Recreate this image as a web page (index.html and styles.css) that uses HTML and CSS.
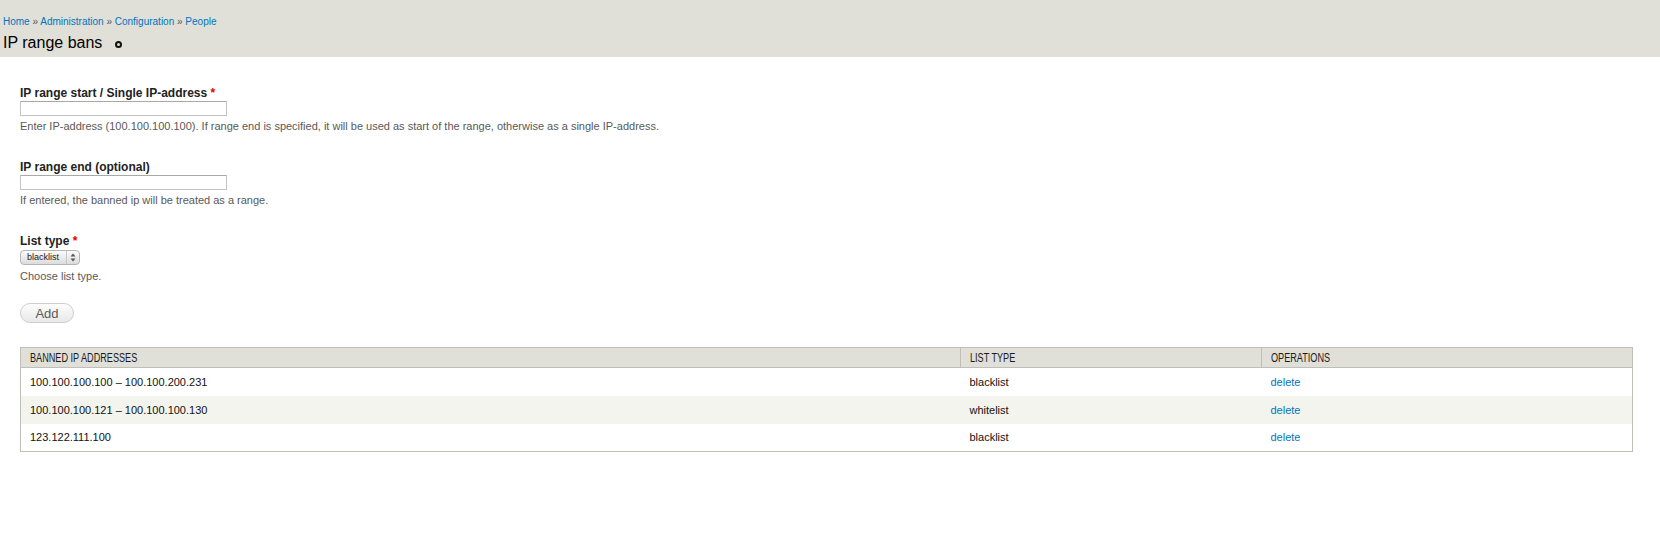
FILE: index.html
```html
<html><head>
    <meta charset="UTF-8">
    <meta name="viewport" content="width=device-width, initial-scale=1.0">
    <title>IP range bans | Administration</title>
    <link rel="stylesheet" href="styles.css">
    </head>
    <body>
        <div class="branding">
            <div class="breadcrumb">
                <a href="#">Home</a> » <a href="#">Administration</a> » <a href="#">Configuration</a> » <a href="#">People</a>
            </div>
            <h1 class="page-title">IP range bans <span class="shortcut"></span></h1>
        </div>

        <div class="content">
            <form class="ban-form">
                <div class="form-item">
                    <label for="ip-start">IP range start / Single IP-address <span class="required">*</span></label>
                    <input type="text" id="ip-start" class="form-text">
                    <div class="description">Enter IP-address (100.100.100.100). If range end is specified, it will be used as start of the range, otherwise as a single IP-address.</div>
                </div>
                <div class="form-item">
                    <label for="ip-end">IP range end (optional)</label>
                    <input type="text" id="ip-end" class="form-text">
                    <div class="description">If entered, the banned ip will be treated as a range.</div>
                </div>
                <div class="form-item form-type-select">
                    <label for="list-type">List type <span class="required">*</span></label>
                    <span class="select-wrap">
                        <select id="list-type" class="form-select">
                            <option>blacklist</option>
                            <option>whitelist</option>
                        </select>
                        <svg class="select-arrows" width="6" height="9" viewBox="0 0 6 9">
                            <path d="M3 0.5 L5.5 3.5 H0.5 Z" fill="#555"/>
                            <path d="M3 8.5 L5.5 5.5 H0.5 Z" fill="#555"/>
                        </svg>
                    </span>
                    <div class="description">Choose list type.</div>
                </div>
                <button type="button" class="form-submit">Add</button>
            </form>

            <table class="bans">
                <thead>
                    <tr>
                        <th class="col-ip"><span>Banned IP addresses</span></th>
                        <th class="col-type"><span>List type</span></th>
                        <th class="col-ops"><span>Operations</span></th>
                    </tr>
                </thead>
                <tbody>
                    <tr>
                        <td>100.100.100.100 – 100.100.200.231</td>
                        <td>blacklist</td>
                        <td><a href="#">delete</a></td>
                    </tr>
                    <tr class="even">
                        <td>100.100.100.121 – 100.100.100.130</td>
                        <td>whitelist</td>
                        <td><a href="#">delete</a></td>
                    </tr>
                    <tr>
                        <td>123.122.111.100</td>
                        <td>blacklist</td>
                        <td><a href="#">delete</a></td>
                    </tr>
                </tbody>
            </table>
        </div>
    </body>
    </html>
```

FILE: styles.css
```css
:root {
    --color-bar: #e0e0d8;
    --color-border: #bebfb9;
    --color-row-even: #f3f4ee;
    --color-link: #0074bd;
    --color-text: #333;
    --color-muted: #595959;
    --color-required: #e60000;
}

body {
    font-family: 'Liberation Sans', Arial, sans-serif;
    margin: 0;
    padding: 0;
    color: var(--color-text);
    background-color: #fff;
}

a {
    color: var(--color-link);
    text-decoration: none;
}

/* top grey bar */
.branding {
    background-color: var(--color-bar);
    height: 57px;
    box-sizing: border-box;
    padding: 15px 3px 0;
}

.breadcrumb {
    font-size: 10px;
    line-height: 14px;
    color: #555;
}

.page-title {
    margin: 4px 0 0;
    font-size: 16px;
    line-height: 20px;
    font-weight: normal;
    color: #000;
    display: flex;
    align-items: center;
}

.shortcut {
    width: 3px;
    height: 3px;
    border: 2px solid #111;
    border-radius: 50%;
    margin-left: 13px;
    margin-top: 2px;
}

.content {
    padding: 28px 27px 0 20px;
}

/* form */
.form-item {
    margin-bottom: 26px;
}

.form-item.form-type-select {
    margin-bottom: 20px;
}

.form-item label {
    display: block;
    font-size: 12px;
    line-height: 16px;
    font-weight: bold;
    color: #222;
}

.required {
    color: var(--color-required);
}

.form-text {
    display: block;
    width: 207px;
    height: 15px;
    box-sizing: border-box;
    margin: 0;
    padding: 0 3px;
    border: 1px solid #c3c3c3;
    border-top-color: #a8a8a8;
    font-size: 11px;
}

.description {
    margin-top: 3px;
    font-size: 11px;
    line-height: 14px;
    color: var(--color-muted);
}

.select-wrap {
    position: relative;
    display: block;
    width: max-content;
    margin-top: 1px;
}

.form-select {
    appearance: none;
    -webkit-appearance: none;
    display: block;
    width: 60px;
    height: 15px;
    box-sizing: border-box;
    margin: 0;
    padding: 0 16px 0 6px;
    font-family: 'Liberation Sans', Arial, sans-serif;
    font-size: 9px;
    line-height: 13px;
    color: #222;
    border: 1px solid #b5b5b5;
    border-radius: 4px;
    background: linear-gradient(#fbfbfb, #dcdcdc);
}

.select-arrows {
    position: absolute;
    top: 1px;
    right: 1px;
    height: 13px;
    width: 13px;
    padding: 0 3px;
    box-sizing: border-box;
    border-left: 1px solid #c5c5c5;
}

.select-wrap + .description {
    margin-top: 4px;
}

.form-submit {
    display: block;
    width: 54px;
    height: 20px;
    margin: 0 0 24px;
    padding: 0;
    font-family: 'Liberation Sans', Arial, sans-serif;
    font-size: 13px;
    color: #5a5a5a;
    border: 1px solid #cfcfcf;
    border-radius: 10px;
    background: linear-gradient(#fdfdfd, #e8e8e8);
}

/* table */
.bans {
    width: 100%;
    border-collapse: collapse;
    border: 1px solid var(--color-border);
    font-size: 11px;
}

.bans th {
    background-color: var(--color-bar);
    height: 20px;
    padding: 0 9px;
    text-align: left;
    font-size: 12px;
    font-weight: normal;
    text-transform: uppercase;
    color: #1a1a1a;
    border-bottom: 1px solid var(--color-border);
    border-left: 1px solid var(--color-border);
    white-space: nowrap;
}

.bans th span {
    display: inline-block;
    transform: scaleX(0.76);
    transform-origin: left center;
}

.bans th:first-child {
    border-left: none;
}

.col-ip {
    width: 921px;
}

.col-type {
    width: 282px;
}

.bans td {
    height: 28px;
    padding: 0 9px;
    color: #111;
}

.bans tr.even td {
    background-color: var(--color-row-even);
}
```
